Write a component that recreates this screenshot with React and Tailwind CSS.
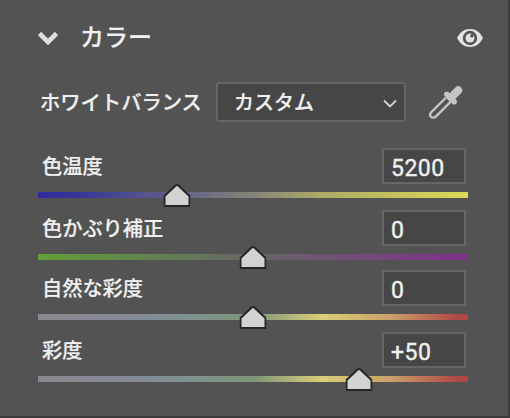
const sliders = [
  {
    label: '色温度',
    value: '5200',
    position: 139,
    track: 'bg-[linear-gradient(to_right,#302ca0,#34309a_6%,#62628a_33%,#858578_50%,#acab66_66%,#dcda54)]',
    spacing: 'mb-3',
  },
  {
    label: '色かぶり補正',
    value: '0',
    position: 215,
    track: 'bg-[linear-gradient(to_right,#60a038,#666666_50%,#80308c)]',
    spacing: 'mb-2.5',
  },
  {
    label: '自然な彩度',
    value: '0',
    position: 215,
    track: 'bg-[linear-gradient(to_right,#8d8890,#848896_20%,#80938f_36%,#7d9478_50%,#d8cf78_66%,#caa068_82%,#b04a48_97%,#b04444)]',
    spacing: 'mb-3',
  },
  {
    label: '彩度',
    value: '+50',
    position: 321,
    track: 'bg-[linear-gradient(to_right,#8d8890,#848896_20%,#80938f_36%,#7d9478_50%,#d8cf78_66%,#caa068_82%,#b04a48_97%,#b04444)]',
    spacing: '',
  },
]

function EyeIcon() {
  return (
    <svg className="h-5 w-[26px]" viewBox="0 0 26 20" fill="none">
      <path d="M0 10C3 4 7.5 1 13 1s10 3 13 9c-3 6-7.5 9-13 9S3 16 0 10z" fill="#e2e2e2" />
      <circle cx="13" cy="10" r="7.2" fill="#535353" />
      <circle cx="13" cy="10" r="4.5" fill="#e2e2e2" />
      <circle cx="14.9" cy="7.8" r="1.8" fill="#535353" />
    </svg>
  )
}

function DropperIcon() {
  return (
    <svg className="h-[35px] w-[35px]" viewBox="0 0 35 35" fill="none" stroke="#c4c4c4">
      <path
        d="M18 12.5L3.500 27C1.800 28.700 1.800 30.600 2.900 31.800s3.400 1.200 5.100-.5L22.500 16.800"
        strokeWidth="2.400"
      />
      <path d="M30.200 5.300L23 12.500" strokeWidth="8" strokeLinecap="round" />
      <path d="M18.800 9.300l7.400 7.400" strokeWidth="5.500" strokeLinecap="round" />
    </svg>
  )
}

function Slider({ label, value, position, track, spacing }) {
  return (
    <div className={spacing}>
      <div className="flex h-9 w-[428px] items-start justify-between pl-1">
        <span className="text-[20.2px] leading-9 font-medium">{label}</span>
        <div className="h-9 w-[84px] border-2 border-[#666666] bg-[#464646] pl-[7px] font-[Roboto] text-[23px] leading-[38px] tracking-[0.5px] [-webkit-text-stroke:0.4px_#f0f0f0]">
          {value}
        </div>
      </div>
      <div className={`relative mt-2 h-1.5 w-[430px] ${track}`}>
        <svg
          className="absolute -top-2 h-[23px] w-[27px] -translate-x-1/2"
          style={{ left: position - 0.5 }}
          viewBox="0 0 27 23"
        >
          <path d="M1 22V12L12.2 1.500q1.300-1 2.600 0L26 12v10z" fill="#d2d2d2" stroke="#262626" strokeWidth="2" />
        </svg>
      </div>
    </div>
  )
}

function App() {
  return (
    <div className="h-[418px] w-[510px] overflow-hidden border-r-2 border-b-2 border-[#3c3c3c] bg-[#535353] pl-[38px] font-['Noto_Sans_CJK_JP',sans-serif] text-[#f0f0f0] [-webkit-text-stroke:0.2px_#f0f0f0]">
      {/* Cabeçalho do painel */}
      <header className="flex h-[76px] items-center pr-[25px]">
        <svg className="h-[14px] w-5" viewBox="0 0 20 14" fill="none">
          <path d="M1.500 2.500L10 11 18.500 2.500" stroke="#dedede" strokeWidth="4.600" />
        </svg>
        <h1 className="-mt-1 ml-[22px] text-[24px] leading-none font-medium">カラー</h1>
        <div className="ml-auto">
          <EyeIcon />
        </div>
      </header>

      <div className="mt-1.5 flex h-10 items-center">
        <span className="-mt-0.5 w-[178px] pl-0.5 text-[20.3px] leading-none font-medium whitespace-nowrap">ホワイトバランス</span>
        <button className="flex h-10 w-[190px] items-center justify-between rounded-[4px] border-2 border-[#666666] bg-[#464646] pr-[7px] pl-4 text-[20px] leading-none font-medium">
          カスタム
          <svg className="mt-0.5 h-[9px] w-[14px]" viewBox="0 0 14 9" fill="none">
            <path d="M1 1.500l6 6 6-6" stroke="#d4d4d4" strokeWidth="1.800" />
          </svg>
        </button>
        <div className="ml-[22px]">
          <DropperIcon />
        </div>
      </div>

      <div className="mt-[26px]">
        {sliders.map((s) => (
          <Slider key={s.label} {...s} />
        ))}
      </div>
    </div>
  )
}

export default App
